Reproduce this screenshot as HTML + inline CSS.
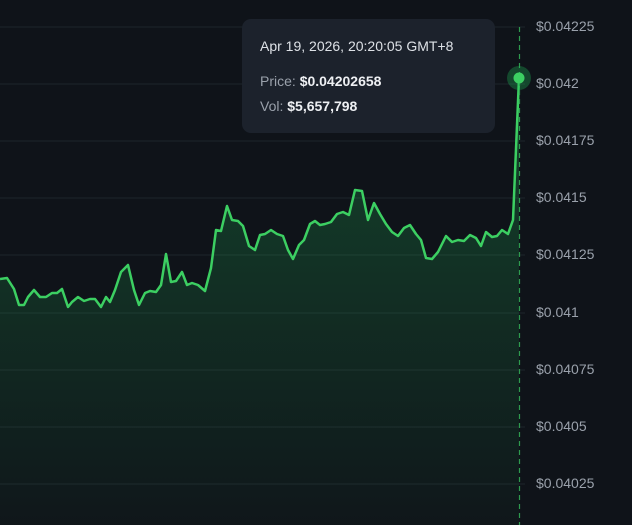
<!DOCTYPE html>
<html><head><style>
html,body{margin:0;padding:0;background:#0f1319;width:632px;height:525px;overflow:hidden;font-family:"Liberation Sans",sans-serif;}
.lbl{position:absolute;left:536px;color:#9aa1ab;font-size:14px;}
.tip{position:absolute;left:242px;top:19px;width:253px;height:114px;background:#1c222c;border-radius:9px;color:#dde1e6;font-size:14px;}
.tip div{position:absolute;left:18px;}
.g{color:#9aa1ab}
b{color:#eef0f3}
</style></head><body>
<svg width="632" height="525" style="position:absolute;left:0;top:0">
<defs><linearGradient id="f" x1="0" y1="0" x2="0" y2="1"><stop offset="0" stop-color="#22c55e" stop-opacity="0.28"/><stop offset="1" stop-color="#22c55e" stop-opacity="0.02"/></linearGradient></defs>
<g stroke="#1e242b" stroke-width="1">
<line x1="0" y1="27" x2="525" y2="27"/><line x1="0" y1="84" x2="525" y2="84"/><line x1="0" y1="141" x2="525" y2="141"/><line x1="0" y1="198" x2="525" y2="198"/><line x1="0" y1="255" x2="525" y2="255"/><line x1="0" y1="313" x2="525" y2="313"/><line x1="0" y1="370" x2="525" y2="370"/><line x1="0" y1="427" x2="525" y2="427"/><line x1="0" y1="484" x2="525" y2="484"/>
</g>
<path d="M0,279 L7,278 14,289 19,305 24,305 28,297 34,290 40,297 46,297 52,293 57,293 62,289 68,307 72,302 78,297 84,301 90,299 95,299 101,307 106,297 110,302 115,290 121,272 128,265 134,290 139,305 145,293 150,291 156,292 161,285 166,254 171,282 176,281 182,272 187,285 192,283 198,285 205,291 211,268 216,230 221,231 227,206 232,220 238,221 243,226 249,246 255,250 260,235 265,234 271,230 277,234 283,236 288,250 293,259 299,245 304,240 310,224 315,221 320,225 325,224 331,222 337,214 343,212 349,215 355,190 362,191 368,220 374,203 380,214 386,224 392,232 398,236 404,228 410,225 416,234 421,240 426,258 432,259 438,252 446,236 452,242 458,240 464,241 470,235 476,238 481,246 486,232 492,237 497,236 502,230 508,234 513,220 519,78 L519,525 L0,525 Z" fill="url(#f)"/>
<path d="M0,279 L7,278 14,289 19,305 24,305 28,297 34,290 40,297 46,297 52,293 57,293 62,289 68,307 72,302 78,297 84,301 90,299 95,299 101,307 106,297 110,302 115,290 121,272 128,265 134,290 139,305 145,293 150,291 156,292 161,285 166,254 171,282 176,281 182,272 187,285 192,283 198,285 205,291 211,268 216,230 221,231 227,206 232,220 238,221 243,226 249,246 255,250 260,235 265,234 271,230 277,234 283,236 288,250 293,259 299,245 304,240 310,224 315,221 320,225 325,224 331,222 337,214 343,212 349,215 355,190 362,191 368,220 374,203 380,214 386,224 392,232 398,236 404,228 410,225 416,234 421,240 426,258 432,259 438,252 446,236 452,242 458,240 464,241 470,235 476,238 481,246 486,232 492,237 497,236 502,230 508,234 513,220 519,78" fill="none" stroke="#3ccf62" stroke-width="2.5" stroke-linejoin="round"/>
<line x1="519.5" y1="27" x2="519.5" y2="525" stroke="#2e9a4e" stroke-width="1.2" stroke-dasharray="5,4"/>
<circle cx="519" cy="78" r="12" fill="#22c55e" fill-opacity="0.3"/>
<circle cx="519" cy="78" r="5.5" fill="#3ccf62"/>
</svg>
<div class="lbl" style="top:18px">$0.04225</div>
<div class="lbl" style="top:75px">$0.042</div>
<div class="lbl" style="top:132px">$0.04175</div>
<div class="lbl" style="top:189px">$0.0415</div>
<div class="lbl" style="top:246px">$0.04125</div>
<div class="lbl" style="top:304px">$0.041</div>
<div class="lbl" style="top:361px">$0.04075</div>
<div class="lbl" style="top:418px">$0.0405</div>
<div class="lbl" style="top:475px">$0.04025</div>
<div class="tip">
<div style="top:19px">Apr 19, 2026, 20:20:05 GMT+8</div>
<div style="top:54px"><span class="g">Price:</span> <b>$0.04202658</b></div>
<div style="top:79px"><span class="g">Vol:</span> <b>$5,657,798</b></div>
</div>
</body></html>
